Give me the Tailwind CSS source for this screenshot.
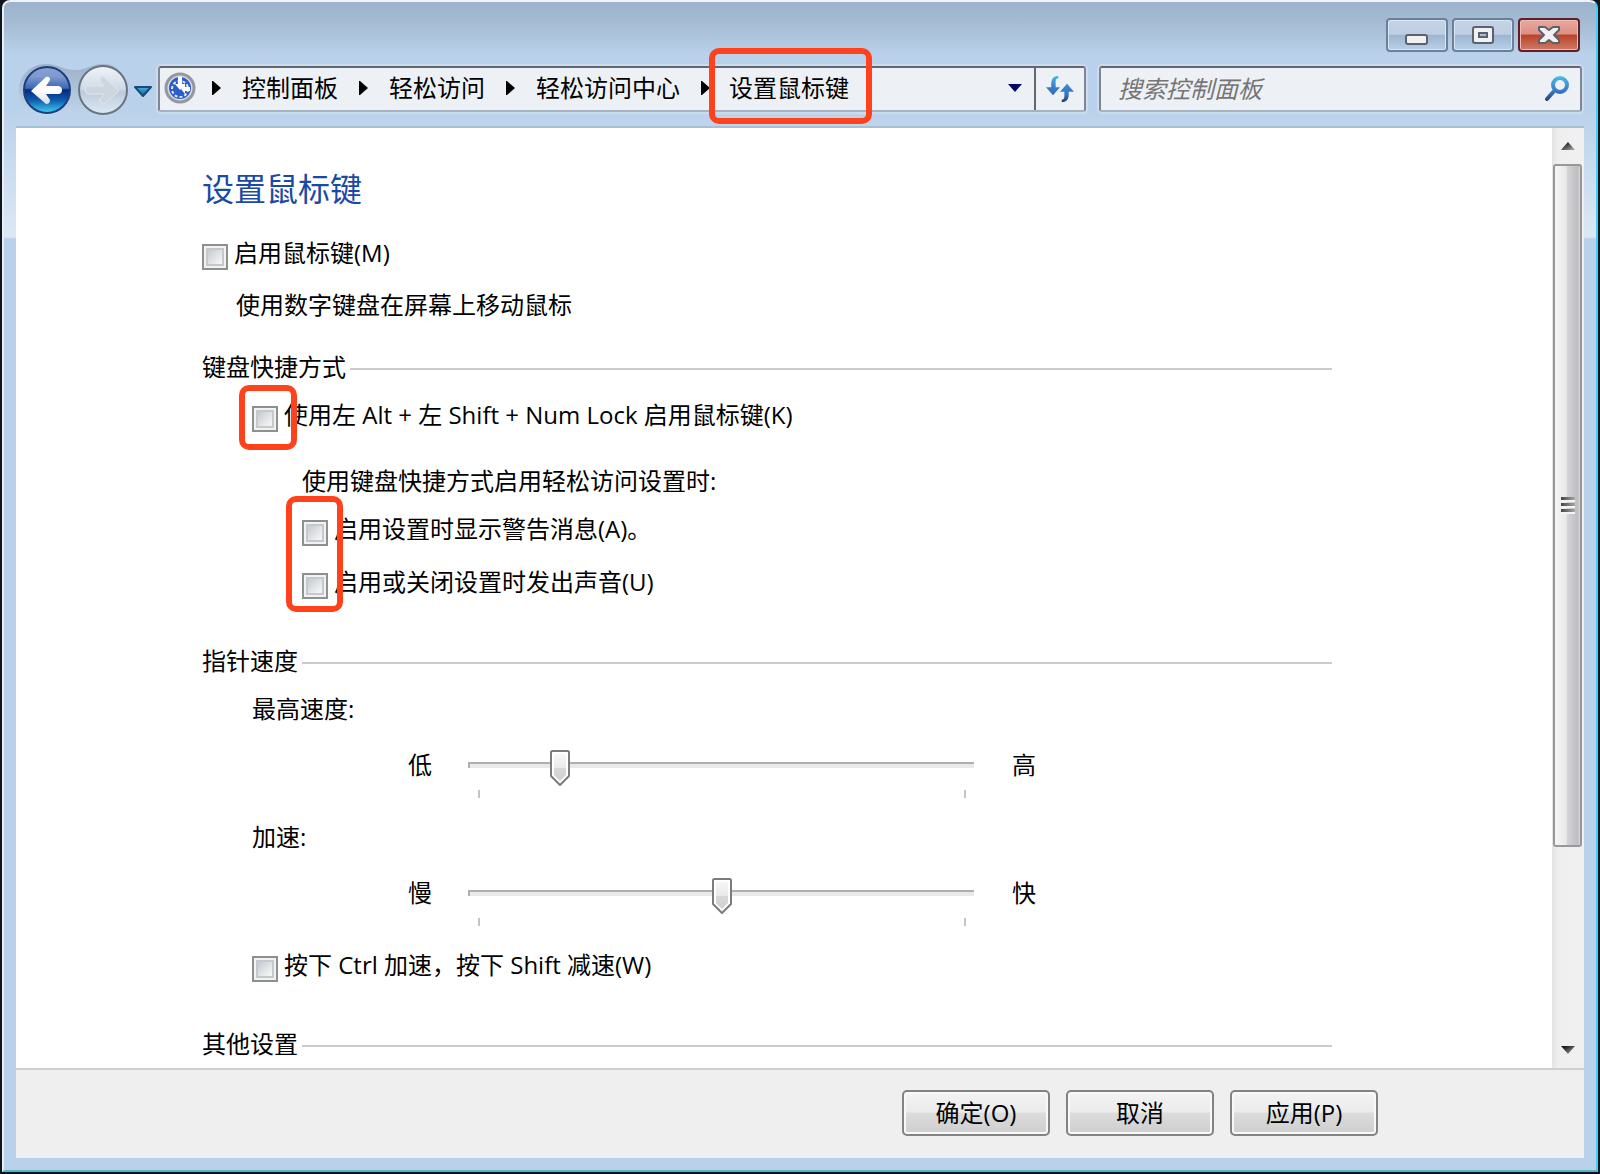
<!DOCTYPE html>
<html lang="zh-CN">
<head>
<meta charset="utf-8">
<meta name="viewport" content="width=device-width, initial-scale=1">
<title>设置鼠标键</title>
<script src="https://cdn.jsdelivr.net/npm/@tailwindcss/browser@4"></script>
</head>
<body class="flex min-h-screen flex-col bg-[#10161e] px-[2px] pb-[2px] font-['Open_Sans','Noto_Sans_CJK_SC',sans-serif] text-2xl leading-8 text-black">
<div class="flex flex-1 flex-col rounded-t-lg border-2 border-t-[#f0f3f6] border-r-[#3fd0f5] border-b-[#57b4c6] border-l-[#e8eff7] bg-[#b9d1ea] bg-[linear-gradient(180deg,#9db3cd_0px,#a5bad3_20px,#b9d1ea_52px,#b9d1ea_104px,#dce8f5_235px,#b9d1ea_237px)]">

  <!-- Title bar -->
  <header class="flex justify-end gap-1 pt-4 pr-4">
    <button type="button" aria-label="最小化" class="flex h-[34px] w-[62px] items-center justify-center rounded border-2 border-[#6d809a] bg-[linear-gradient(180deg,#c5d4e6_0%,#bccee2_48%,#9db4ce_50%,#b8d0ea_100%)] shadow-[inset_0_0_0_1px_#d8e6f4]">
      <svg class="h-[30px] w-[30px]" viewBox="0 0 30 30"><rect x="4" y="15" width="21" height="9" rx="2" fill="#f1f1f1" stroke="#5b626e" stroke-width="2"/></svg>
    </button>
    <button type="button" aria-label="最大化" class="flex h-[34px] w-[62px] items-center justify-center rounded border-2 border-[#6d809a] bg-[linear-gradient(180deg,#c5d4e6_0%,#bccee2_48%,#9db4ce_50%,#b8d0ea_100%)] shadow-[inset_0_0_0_1px_#d8e6f4]">
      <svg class="h-[30px] w-[30px]" viewBox="0 0 30 30"><rect x="5" y="7" width="20" height="16" rx="2" fill="#f1f1f1" stroke="#5b626e" stroke-width="2"/><rect x="11" y="13" width="8" height="4" fill="#a9bfd8" stroke="#5b626e" stroke-width="2"/></svg>
    </button>
    <button type="button" aria-label="关闭" class="flex h-[34px] w-[62px] items-center justify-center rounded border-2 border-[#5c1f2b] bg-[linear-gradient(180deg,#e8a99f_0%,#dd8f83_47%,#b8432a_50%,#d07a64_100%)] shadow-[inset_0_0_0_1px_#ecbdb4]">
      <svg class="h-[30px] w-[30px]" viewBox="0 0 30 30"><path d="M5 7h6l4 3 4-3h6v3l-5 5 5 5v3h-6l-4-3-4 3H5v-3l5-5-5-5z" fill="#f1f1f1" stroke="#5b626e" stroke-width="2" stroke-linejoin="round"/></svg>
    </button>
  </header>

  <!-- Navigation, address and search -->
  <nav class="mt-3 flex pr-[14px] pl-[14px]">
    <svg class="h-[52px] w-[140px] shrink-0" viewBox="18 64 140 52">
      <defs>
        <linearGradient id="back" x1="0" y1="0" x2="0" y2="1"><stop offset="0" stop-color="#8a9fd0"/><stop offset=".2" stop-color="#7f9bd0"/><stop offset=".46" stop-color="#3c68b4"/><stop offset=".5" stop-color="#08287c"/><stop offset=".72" stop-color="#0d5cae"/><stop offset="1" stop-color="#42d2fa"/></linearGradient>
        <linearGradient id="fwd" x1="0" y1="0" x2="0" y2="1"><stop offset="0" stop-color="#f0f4f8"/><stop offset=".48" stop-color="#cfdae6"/><stop offset=".52" stop-color="#bccbdc"/><stop offset="1" stop-color="#dce8f4"/></linearGradient>
        <linearGradient id="tray" x1="0" y1="0" x2="0" y2="1"><stop offset="0" stop-color="#96aac2"/><stop offset="1" stop-color="#c2d7ec"/></linearGradient>
        <linearGradient id="arrow" x1="0" y1="0" x2="0" y2="1"><stop offset=".5" stop-color="#fff"/><stop offset="1" stop-color="#d8dade"/></linearGradient>
        <linearGradient id="drop" x1="0" y1="0" x2="0" y2="1"><stop offset="0" stop-color="#46b0e4"/><stop offset="1" stop-color="#1a5a96"/></linearGradient>
      </defs>
      <path d="M46 64c13 0 16 6 29 6s16-6 28-6c14 0 24 12 24 26s-10 26-24 26c-12 0-16-3-28-3s-16 3-29 3c-15 0-27-11-27-26s12-26 27-26z" fill="url(#tray)" opacity=".8"/>
      <circle cx="47" cy="90" r="23" fill="url(#back)" stroke="#1c3e7c" stroke-width="2"/>
      <path d="M31 91L46 77q4-1 4 3l-4 6h13q3 1 3 4t-3 4H46l4 6q0 4-4 4z" fill="url(#arrow)"/>
      <circle cx="103" cy="90" r="24" fill="url(#fwd)" stroke="#6a7480" stroke-width="2"/>
      <path d="M119 91L104 77q-4-1-4 3l4 6H88q-3 1-3 4t3 4h16l-4 6q0 4 4 4z" fill="#cdd5de" stroke="#dfe6ee"/>
      <path d="M135 87h16l-8 9z" fill="url(#drop)" stroke="#164a78" stroke-width="2" stroke-linejoin="round"/>
    </svg>

    <div class="mt-[2px] flex h-[46px] min-w-0 flex-1 rounded-[3px] border-2 border-[#7d8692] border-t-[#626872] border-b-[#a6b2c0] bg-[#edf1f6] shadow-[0_0_0_2px_#cbdced]">
      <div class="flex min-w-0 flex-1 items-center pb-[2px] pl-1 whitespace-nowrap">
        <svg class="h-8 w-8 shrink-0" viewBox="0 0 32 32"><circle cx="16" cy="16" r="14" fill="#d9dce2" stroke="#94979d" stroke-width="3"/><circle cx="16" cy="16" r="11" fill="#2c5ccb"/><circle cx="16" cy="17" r="8" fill="none" stroke="#e4ecfa" stroke-width="2" stroke-dasharray="3 2"/><path d="M14 5h4v7h3l-5 6-5-6h3zM17 17l4-5v3h5v4h-5v3z" fill="#fff"/></svg>
        <svg class="ml-4 h-[14px] w-[9px] shrink-0" viewBox="0 0 9 14"><path d="M0 0h1l8 7-8 7H0z"/></svg>
        <a href="#" class="mx-[21px]">控制面板</a>
        <svg class="h-[14px] w-[9px] shrink-0" viewBox="0 0 9 14"><path d="M0 0h1l8 7-8 7H0z"/></svg>
        <a href="#" class="mx-[21px]">轻松访问</a>
        <svg class="h-[14px] w-[9px] shrink-0" viewBox="0 0 9 14"><path d="M0 0h1l8 7-8 7H0z"/></svg>
        <a href="#" class="mx-[21px]">轻松访问中心</a>
        <svg class="h-[14px] w-[9px] shrink-0" viewBox="0 0 9 14"><path d="M0 0h1l8 7-8 7H0z"/></svg>
        <a href="#" class="relative ml-[19px]">设置鼠标键<span class="pointer-events-none absolute -top-6 -right-[23px] -bottom-5 -left-5 rounded-[10px] border-[6px] border-[#ff421c]"></span></a>
        <button type="button" aria-label="历史记录" class="mr-[11px] ml-auto">
          <svg class="h-[10px] w-4" viewBox="0 0 16 10"><path d="M1 1h14L8 9z" fill="#04046a"/></svg>
        </button>
      </div>
      <button type="button" aria-label="刷新" class="flex w-[50px] shrink-0 items-center justify-center border-l-2 border-[#626872]">
        <svg class="h-7 w-7" viewBox="0 0 32 32">
          <defs><linearGradient id="ref" x1="0" y1="0" x2="0" y2="1"><stop offset="0" stop-color="#45bde2"/><stop offset=".5" stop-color="#3c82cc"/><stop offset="1" stop-color="#2f6bb4"/></linearGradient><linearGradient id="ref2" x1="0" y1="0" x2="0" y2="1"><stop offset="0" stop-color="#3c8ad0"/><stop offset=".6" stop-color="#3a74bc"/><stop offset="1" stop-color="#233a6c"/></linearGradient></defs>
          <path d="M14 1c-5 0-8 3-8 9v4H0l8 9 8-9h-5v-4c0-4 0-6 3-6z" fill="url(#ref)"/>
          <path d="M18 31c5 0 8-3 8-9v-3h6l-8-9-8 9h5v3c0 4 0 6-3 6z" fill="url(#ref2)"/>
        </svg>
      </button>
    </div>

    <div class="mt-[2px] ml-[13px] flex h-[46px] w-[483px] items-center rounded-[3px] border-2 border-[#7d8692] border-t-[#626872] border-b-[#a6b2c0] bg-[#edf1f6] pr-[10px] pl-[17px] shadow-[0_0_0_2px_#cbdced]">
      <input type="search" aria-label="搜索控制面板" placeholder="搜索控制面板" class="h-8 min-w-0 flex-1 bg-transparent italic outline-none placeholder:text-[#757575]">
      <svg class="h-[26px] w-[26px] shrink-0" viewBox="0 0 26 26"><defs><linearGradient id="lens" gradientUnits="userSpaceOnUse" x1="0" y1="0" x2="0" y2="26"><stop offset="0" stop-color="#4cbcec"/><stop offset=".6" stop-color="#3a76bc"/><stop offset="1" stop-color="#1e3a74"/></linearGradient></defs><circle cx="16" cy="9" r="7" fill="none" stroke="url(#lens)" stroke-width="4"/><path d="M11 14l-8 9" fill="none" stroke="url(#lens)" stroke-width="4" stroke-linecap="round"/></svg>
    </div>
  </nav>

  <!-- Content -->
  <div class="mx-3 mt-[10px] mb-3 flex flex-1 flex-col">
    <div class="flex flex-1 border-t-2 border-[#a9bfd6] bg-white">
      <main class="flex flex-1 flex-col pt-[41px] pr-[220px] pb-[6px] pl-[186px]">
        <h1 class="text-[32px] leading-10 text-[#1a4aa6]">设置鼠标键</h1>
        <label class="mt-7 flex items-start gap-[6px] self-start">
          <input type="checkbox" class="mt-[7px] h-[26px] w-[26px] appearance-none border-2 border-[#8e8f8f] bg-[linear-gradient(135deg,#c3c8ce_15%,#f4f4f4_75%)] shadow-[inset_0_0_0_2px_#f2f2f2,inset_0_0_0_4px_#c4c9ce]">启用鼠标键(M)</label>
        <p class="mt-[19px] ml-[34px]">使用数字键盘在屏幕上移动鼠标</p>

        <h2 class="mt-[30px] flex items-center gap-1">键盘快捷方式<span class="mt-1 h-[2px] flex-1 bg-[#cbcbcb]"></span></h2>
        <label class="mt-4 ml-[50px] flex items-start gap-[6px] self-start">
          <span class="relative mt-[7px] flex"><input type="checkbox" class="h-[26px] w-[26px] appearance-none border-2 border-[#8e8f8f] bg-[linear-gradient(135deg,#c3c8ce_15%,#f4f4f4_75%)] shadow-[inset_0_0_0_2px_#f2f2f2,inset_0_0_0_4px_#c4c9ce]"><span class="pointer-events-none absolute -top-[21px] -right-[19px] -bottom-[18px] -left-[13px] rounded-[10px] border-[6px] border-[#ff421c]"></span></span>使用左 Alt + 左 Shift + Num Lock 启用鼠标键(K)</label>
        <p class="mt-[33px] ml-[100px]">使用键盘快捷方式启用轻松访问设置时:</p>
        <div class="relative mt-4 ml-[100px] flex flex-col items-start gap-5">
          <label class="flex items-start gap-[6px]">
            <input type="checkbox" class="mt-[7px] h-[26px] w-[26px] appearance-none border-2 border-[#8e8f8f] bg-[linear-gradient(135deg,#c3c8ce_15%,#f4f4f4_75%)] shadow-[inset_0_0_0_2px_#f2f2f2,inset_0_0_0_4px_#c4c9ce]">启用设置时显示警告消息(A)。</label>
          <label class="flex items-start gap-[6px]">
            <input type="checkbox" class="mt-[7px] h-[26px] w-[26px] appearance-none border-2 border-[#8e8f8f] bg-[linear-gradient(135deg,#c3c8ce_15%,#f4f4f4_75%)] shadow-[inset_0_0_0_2px_#f2f2f2,inset_0_0_0_4px_#c4c9ce]">启用或关闭设置时发出声音(U)</label>
          <span class="pointer-events-none absolute -top-[17px] -bottom-[13px] -left-4 w-[57px] rounded-[10px] border-[6px] border-[#ff421c]"></span>
        </div>

        <h2 class="mt-[46px] flex items-center gap-1">指针速度<span class="mt-1 h-[2px] flex-1 bg-[#cbcbcb]"></span></h2>
        <label for="speed" class="mt-4 ml-[50px] self-start">最高速度:</label>
        <div class="mt-6 ml-[206px] flex h-12 items-start">
          <span>低</span>
          <div class="relative mr-[38px] ml-9 h-12 w-[506px]">
            <div class="mt-[13px] h-[6px] border-t-2 border-l-2 border-[#b0b0b0] bg-[#e9e9e9]"></div>
            <div class="mt-[22px] mr-2 ml-[10px] h-2 border-x-2 border-[#c4c4c4]"></div>
            <div class="absolute top-0 right-[9px] left-[11px]">
              <svg class="absolute top-0 h-[38px] w-[22px] -translate-x-1/2" style="left:16.7%" viewBox="0 0 22 38"><defs><linearGradient id="knob" x1="0" y1="0" x2="0" y2="1"><stop offset="0" stop-color="#f6f6f6"/><stop offset=".5" stop-color="#eaeaea"/><stop offset=".52" stop-color="#d8d8d8"/><stop offset="1" stop-color="#cfcfcf"/></linearGradient></defs><path d="M3 2h16l1 1v24l-9 9-9-9V3z" fill="#fff" stroke="#7c7c7c" stroke-width="2" stroke-linejoin="round"/><path d="M5 5h12v21l-6 6-6-6z" fill="url(#knob)"/></svg>
            </div>
            <input id="speed" type="range" min="0" max="12" value="2" class="absolute inset-0 m-0 h-9 w-full opacity-0">
          </div>
          <span>高</span>
        </div>
        <label for="accel" class="mt-6 ml-[50px] self-start">加速:</label>
        <div class="mt-6 ml-[206px] flex h-12 items-start">
          <span>慢</span>
          <div class="relative mr-[38px] ml-9 h-12 w-[506px]">
            <div class="mt-[13px] h-[6px] border-t-2 border-l-2 border-[#b0b0b0] bg-[#e9e9e9]"></div>
            <div class="mt-[22px] mr-2 ml-[10px] h-2 border-x-2 border-[#c4c4c4]"></div>
            <div class="absolute top-0 right-[9px] left-[11px]">
              <svg class="absolute top-0 h-[38px] w-[22px] -translate-x-1/2" style="left:50%" viewBox="0 0 22 38"><path d="M3 2h16l1 1v24l-9 9-9-9V3z" fill="#fff" stroke="#7c7c7c" stroke-width="2" stroke-linejoin="round"/><path d="M5 5h12v21l-6 6-6-6z" fill="url(#knob)"/></svg>
            </div>
            <input id="accel" type="range" min="0" max="12" value="6" class="absolute inset-0 m-0 h-9 w-full opacity-0">
          </div>
          <span>快</span>
        </div>
        <label class="mt-6 ml-[50px] flex items-start gap-[6px] self-start">
          <input type="checkbox" class="mt-[7px] h-[26px] w-[26px] appearance-none border-2 border-[#8e8f8f] bg-[linear-gradient(135deg,#c3c8ce_15%,#f4f4f4_75%)] shadow-[inset_0_0_0_2px_#f2f2f2,inset_0_0_0_4px_#c4c9ce]">按下 Ctrl 加速，按下 Shift 减速(W)</label>

        <h2 class="mt-[46px] flex items-center gap-1">其他设置<span class="mt-1 h-[2px] flex-1 bg-[#cbcbcb]"></span></h2>
      </main>

      <!-- Scroll bar -->
      <div class="flex w-8 shrink-0 flex-col bg-[linear-gradient(90deg,#e3e3e3,#efefef_20%,#f0f0f0)] pr-[2px] pl-px">
        <button type="button" aria-label="向上滚动" class="flex h-9 items-center justify-center"><svg class="h-2 w-[14px]" viewBox="0 0 14 8"><defs><linearGradient id="tri" x1="0" y1="0" x2="1" y2="1"><stop offset=".2" stop-color="#1c1c1c"/><stop offset="1" stop-color="#b0b0b0"/></linearGradient></defs><path d="M0 8l7-8 7 8z" fill="url(#tri)"/></svg></button>
        <div class="flex flex-[682] items-center justify-center rounded-[3px] border-2 border-[#989898] bg-[linear-gradient(90deg,#f6f6f6_0%,#e8e8ea_45%,#d3d3d6_50%,#bebec1_90%,#d6d6d8_100%)]">
          <svg class="h-[18px] w-[14px]" viewBox="0 0 14 18"><defs><linearGradient id="grip" gradientUnits="userSpaceOnUse" x1="0" y1="0" x2="14" y2="0"><stop offset="0" stop-color="#444"/><stop offset="1" stop-color="#a8a8a8"/></linearGradient></defs><path d="M0 4h14v2H0zM0 10h14v2H0zM0 16h14v2H0z" fill="#f4f4f4"/><path d="M0 1h14v3H0zM0 7h14v3H0zM0 13h14v3H0z" fill="url(#grip)"/></svg>
        </div>
        <div class="flex-[186]"></div>
        <button type="button" aria-label="向下滚动" class="flex h-9 items-center justify-center"><svg class="h-2 w-[14px]" viewBox="0 0 14 8"><path d="M0 0h14L7 8z" fill="url(#tri)"/></svg></button>
      </div>
    </div>

    <footer class="flex justify-end gap-4 border-t-2 border-[#cfcfcf] bg-[#efefef] pt-5 pr-[206px] pb-[22px]">
      <button type="button" class="h-[46px] w-[148px] rounded-[5px] border-2 border-[#838383] bg-[linear-gradient(180deg,#f3f3f3_0%,#ebebeb_48%,#dcdcdc_50%,#cecece_100%)] shadow-[inset_0_0_0_2px_#f8f8f8]">确定(O)</button>
      <button type="button" class="h-[46px] w-[148px] rounded-[5px] border-2 border-[#838383] bg-[linear-gradient(180deg,#f3f3f3_0%,#ebebeb_48%,#dcdcdc_50%,#cecece_100%)] shadow-[inset_0_0_0_2px_#f8f8f8]">取消</button>
      <button type="button" class="h-[46px] w-[148px] rounded-[5px] border-2 border-[#838383] bg-[linear-gradient(180deg,#f3f3f3_0%,#ebebeb_48%,#dcdcdc_50%,#cecece_100%)] shadow-[inset_0_0_0_2px_#f8f8f8]">应用(P)</button>
    </footer>
  </div>
</div>
</body>
</html>
